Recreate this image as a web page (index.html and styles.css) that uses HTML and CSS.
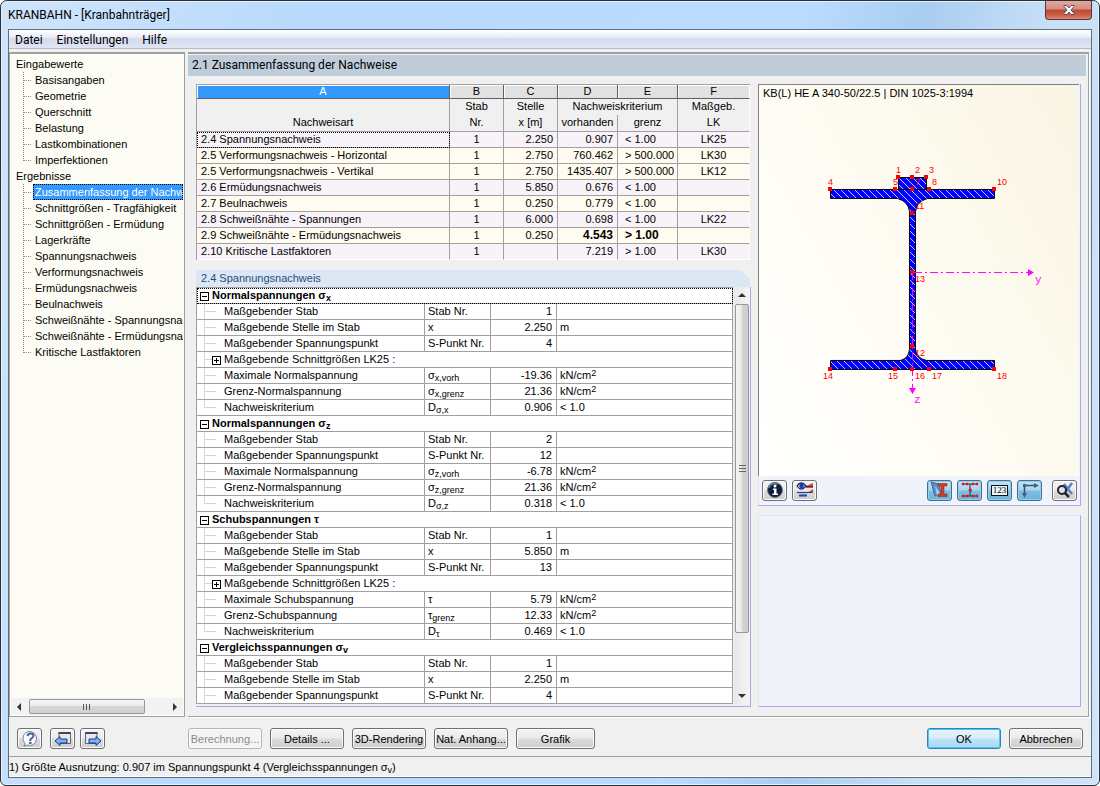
FILE: index.html
```html
<!DOCTYPE html>
<html lang="de">
<head>
<meta charset="utf-8">
<title>KRANBAHN - [Kranbahnträger]</title>
<link rel="stylesheet" href="styles.css">
</head>
<body>
<div class="window">
  <header class="titlebar">
    <h1>KRANBAHN - [Kranbahnträger]</h1>
    <button class="close" aria-label="Schließen"><svg width="12" height="10" viewBox="0 0 12 10"><path d="M1 .5h3L6 3 8 .5h3v1L8 5l3 3.500v1H8L6 7 4 9.500H1v-1L4 5 1 1.500z" fill="#fff" stroke="#555060" stroke-width="1"/></svg></button>
  </header>
  <div class="client">
    <nav class="menubar"><a href="#">Datei</a><a href="#">Einstellungen</a><a href="#">Hilfe</a></nav>
    <div class="workspace">
      <aside class="sidebar">
        <nav class="tree">
          <span class="root">Eingabewerte</span>
          <ul>
            <li><a href="#">Basisangaben</a></li>
            <li><a href="#">Geometrie</a></li>
            <li><a href="#">Querschnitt</a></li>
            <li><a href="#">Belastung</a></li>
            <li><a href="#">Lastkombinationen</a></li>
            <li><a href="#">Imperfektionen</a></li>
          </ul>
          <span class="root">Ergebnisse</span>
          <ul>
            <li><a href="#" class="current">Zusammenfassung der Nachweise</a></li>
            <li><a href="#">Schnittgrößen - Tragfähigkeit</a></li>
            <li><a href="#">Schnittgrößen - Ermüdung</a></li>
            <li><a href="#">Lagerkräfte</a></li>
            <li><a href="#">Spannungsnachweis</a></li>
            <li><a href="#">Verformungsnachweis</a></li>
            <li><a href="#">Ermüdungsnachweis</a></li>
            <li><a href="#">Beulnachweis</a></li>
            <li><a href="#">Schweißnähte - Spannungsnachweis</a></li>
            <li><a href="#">Schweißnähte - Ermüdungsnachweis</a></li>
            <li><a href="#">Kritische Lastfaktoren</a></li>
          </ul>
        </nav>
        <div class="hscroll">
          <button aria-label="Nach links"><svg width="5" height="8" viewBox="0 0 5 8"><path d="M4 0v8L0 4z" fill="#333"/></svg></button>
          <div class="htrack"><div class="hthumb"><i></i><i></i><i></i></div></div>
          <button aria-label="Nach rechts"><svg width="5" height="8" viewBox="0 0 5 8"><path d="M1 0v8l4-4z" fill="#333"/></svg></button>
        </div>
      </aside>

      <main class="main">
        <h2>2.1 Zusammenfassung der Nachweise</h2>
        <div class="columns">
          <div class="results">
            <table class="summary">
              <colgroup><col><col class="w54"><col class="w54"><col class="w60"><col class="w60"><col class="w72"></colgroup>
              <thead>
                <tr class="letters"><th class="picked">A</th><th>B</th><th>C</th><th>D</th><th>E</th><th>F</th></tr>
                <tr class="names top"><th></th><th>Stab</th><th>Stelle</th><th colspan="2">Nachweiskriterium</th><th>Maßgeb.</th></tr>
                <tr class="names low"><th>Nachweisart</th><th>Nr.</th><th>x [m]</th><th>vorhanden</th><th>grenz</th><th>LK</th></tr>
              </thead>
              <tbody>
                <tr class="mauve"><td class="focus">2.4 Spannungsnachweis</td><td>1</td><td>2.250</td><td>0.907</td><td>&lt; 1.00</td><td>LK25</td></tr>
                <tr><td>2.5 Verformungsnachweis - Horizontal</td><td>1</td><td>2.750</td><td>760.462</td><td>&gt; 500.000</td><td>LK30</td></tr>
                <tr><td>2.5 Verformungsnachweis - Vertikal</td><td>1</td><td>2.750</td><td>1435.407</td><td>&gt; 500.000</td><td>LK12</td></tr>
                <tr class="mauve"><td>2.6 Ermüdungsnachweis</td><td>1</td><td>5.850</td><td>0.676</td><td>&lt; 1.00</td><td></td></tr>
                <tr><td>2.7 Beulnachweis</td><td>1</td><td>0.250</td><td>0.779</td><td>&lt; 1.00</td><td></td></tr>
                <tr class="mauve"><td>2.8 Schweißnähte - Spannungen</td><td>1</td><td>6.000</td><td>0.698</td><td>&lt; 1.00</td><td>LK22</td></tr>
                <tr><td>2.9 Schweißnähte - Ermüdungsnachweis</td><td>1</td><td>0.250</td><td class="exceeded">4.543</td><td class="exceeded">&gt; 1.00</td><td></td></tr>
                <tr class="mauve"><td>2.10 Kritische Lastfaktoren</td><td>1</td><td></td><td>7.219</td><td>&gt; 1.00</td><td>LK30</td></tr>
              </tbody>
            </table>

            <section class="detail">
              <h3>2.4 Spannungsnachweis</h3>
              <div class="detail-body">
                <div class="grid-clip">
                <table class="values">
                  <colgroup><col class="w228"><col class="w66"><col class="w66"><col></colgroup>
                  <tbody>
                    <tr class="group"><th colspan="4" class="focus"><button class="toggle" aria-label="Zuklappen"></button>Normalspannungen σ<sub>x</sub></th></tr>
                    <tr><td>Maßgebender Stab</td><td>Stab Nr.</td><td>1</td><td></td></tr>
                    <tr><td>Maßgebende Stelle im Stab</td><td>x</td><td>2.250</td><td>m</td></tr>
                    <tr><td>Maßgebender Spannungspunkt</td><td>S-Punkt Nr.</td><td>4</td><td></td></tr>
                    <tr><td colspan="4"><button class="toggle plus" aria-label="Aufklappen"></button>Maßgebende Schnittgrößen LK25 :</td></tr>
                    <tr><td>Maximale Normalspannung</td><td>σ<sub>x,vorh</sub></td><td>-19.36</td><td>kN/cm<sup>2</sup></td></tr>
                    <tr><td>Grenz-Normalspannung</td><td>σ<sub>x,grenz</sub></td><td>21.36</td><td>kN/cm<sup>2</sup></td></tr>
                    <tr class="last"><td>Nachweiskriterium</td><td>D<sub>σ,x</sub></td><td>0.906</td><td>&lt; 1.0</td></tr>
                    <tr class="group"><th colspan="4"><button class="toggle" aria-label="Zuklappen"></button>Normalspannungen σ<sub>z</sub></th></tr>
                    <tr><td>Maßgebender Stab</td><td>Stab Nr.</td><td>2</td><td></td></tr>
                    <tr><td>Maßgebender Spannungspunkt</td><td>S-Punkt Nr.</td><td>12</td><td></td></tr>
                    <tr><td>Maximale Normalspannung</td><td>σ<sub>z,vorh</sub></td><td>-6.78</td><td>kN/cm<sup>2</sup></td></tr>
                    <tr><td>Grenz-Normalspannung</td><td>σ<sub>z,grenz</sub></td><td>21.36</td><td>kN/cm<sup>2</sup></td></tr>
                    <tr class="last"><td>Nachweiskriterium</td><td>D<sub>σ,z</sub></td><td>0.318</td><td>&lt; 1.0</td></tr>
                    <tr class="group"><th colspan="4"><button class="toggle" aria-label="Zuklappen"></button>Schubspannungen τ</th></tr>
                    <tr><td>Maßgebender Stab</td><td>Stab Nr.</td><td>1</td><td></td></tr>
                    <tr><td>Maßgebende Stelle im Stab</td><td>x</td><td>5.850</td><td>m</td></tr>
                    <tr><td>Maßgebender Spannungspunkt</td><td>S-Punkt Nr.</td><td>13</td><td></td></tr>
                    <tr><td colspan="4"><button class="toggle plus" aria-label="Aufklappen"></button>Maßgebende Schnittgrößen LK25 :</td></tr>
                    <tr><td>Maximale Schubspannung</td><td>τ</td><td>5.79</td><td>kN/cm<sup>2</sup></td></tr>
                    <tr><td>Grenz-Schubspannung</td><td>τ<sub>grenz</sub></td><td>12.33</td><td>kN/cm<sup>2</sup></td></tr>
                    <tr class="last"><td>Nachweiskriterium</td><td>D<sub>τ</sub></td><td>0.469</td><td>&lt; 1.0</td></tr>
                    <tr class="group"><th colspan="4"><button class="toggle" aria-label="Zuklappen"></button>Vergleichsspannungen σ<sub>v</sub></th></tr>
                    <tr><td>Maßgebender Stab</td><td>Stab Nr.</td><td>1</td><td></td></tr>
                    <tr><td>Maßgebende Stelle im Stab</td><td>x</td><td>2.250</td><td>m</td></tr>
                    <tr><td>Maßgebender Spannungspunkt</td><td>S-Punkt Nr.</td><td>4</td><td></td></tr>
                  </tbody>
                </table>
                </div>
                <div class="vscroll">
                  <button aria-label="Nach oben"><svg width="8" height="5" viewBox="0 0 8 5"><path d="M0 4h8L4 0z" fill="#333"/></svg></button>
                  <div class="vtrack"><div class="vthumb"><i></i><i></i><i></i></div></div>
                  <button aria-label="Nach unten"><svg width="8" height="5" viewBox="0 0 8 5"><path d="M0 1h8L4 5z" fill="#333"/></svg></button>
                </div>
              </div>
            </section>
          </div>

          <div class="side">
            <section class="section-view">
              <div class="canvas">
                <p>KB(L) HE A 340-50/22.5 | DIN 1025-3:1994</p>
                <svg class="profile" viewBox="759 101 320 375" preserveAspectRatio="xMidYMin meet" role="img" aria-label="Querschnitt">
                  <defs>
                    <pattern id="hatch" width="7" height="7" patternUnits="userSpaceOnUse"><rect width="7" height="7" fill="#00f"/><path d="M-1-1l9 9M-1 6l2 2M6-1l2 2" stroke="#c4ccff" stroke-width="1"/></pattern>
                  </defs>
                  <g fill="url(#hatch)" stroke="#000" stroke-width="1">
                    <path d="M830.500 189.500h164v9h-67q-11 3-12 13v138q1 9 11 11h68v9h-164v-9h70q8-2 9-11v-138q-1-10-12-13h-67z"/>
                    <path d="M898.500 177.500h28v12h-28z"/>
                  </g>
                  <path d="M912.500 272v116M914 272.500h114" fill="none" stroke="#f0f" stroke-dasharray="8 3 2 3"/>
                  <path d="M1028 269v7l6-3.500zM909 388h7l-3.500 6z" fill="#f0f"/>
                  <g fill="#f00">
                    <path d="M896 175h4v4h-4zM910 175h4v4h-4zM924 175h4v4h-4zM828 187h4v4h-4zM893 187h4v4h-4zM910 187h4v4h-4zM927 187h4v4h-4zM992 187h4v4h-4zM910 211h4v4h-4zM910 270h4v4h-4zM910 344h4v4h-4zM828 367h4v4h-4zM893 367h4v4h-4zM910 367h4v4h-4zM927 367h4v4h-4zM992 367h4v4h-4z"/>
                  </g>
                  <g class="point-labels">
                    <text x="896" y="173">1</text><text x="915" y="173">2</text><text x="929" y="173">3</text>
                    <text x="828" y="185">4</text><text x="893" y="185">5</text><text x="915" y="185">7</text><text x="932" y="185">8</text><text x="997" y="185">10</text>
                    <text x="915" y="209">11</text><text x="915" y="282">13</text><text x="915" y="356">12</text>
                    <text x="823" y="379">14</text><text x="888" y="379">15</text><text x="915" y="379">16</text><text x="932" y="379">17</text><text x="997" y="379">18</text>
                  </g>
                  <g class="axis-labels"><text x="1035" y="283">y</text><text x="914" y="403">z</text></g>
                </svg>
              </div>
              <div class="tools">
                <button aria-label="Info"><svg width="18" height="18" viewBox="0 0 18 18"><circle cx="9" cy="9" r="7.500" fill="#101c3c" stroke="#69748c"/><path d="M3 7a6 5 0 0 1 9-4" fill="none" stroke="#62769c" stroke-width="2"/><circle cx="9" cy="5" r="1.500" fill="#fff"/><path d="M7 7.500h3.500v5H12v1.500H6.500v-1.500H8V9H7z" fill="#fff"/></svg></button>
                <button aria-label="Ergebnisverlauf"><svg width="18" height="18" viewBox="0 0 18 18"><path d="M10 5l7-3v5H10zM11 12l6-4v4z" fill="#d34a42"/><path d="M2 11h9q1 5-4 5.500Q2 16 2 11z" fill="#b9c6dc"/><path d="M1 11.500h15M8 5.500h9" stroke="#33384a" stroke-width="1.200"/><path d="M1 5q4-6 9 0-5 6-9 0z" fill="#eef3ff" stroke="#182a68" stroke-width="1.300"/><circle cx="5.500" cy="5" r="2.300" fill="#1838c8"/><path d="M3 14.500h8" stroke="#2745bd" stroke-width="2"/></svg></button>
                <span class="spacer"></span>
                <button class="on" aria-label="Profil anzeigen"><svg width="20" height="18" viewBox="0 0 20 18"><path d="M1 1l8 2 2 10-6 2z" fill="#5b8fc7" stroke="#446a98"/><path d="M5 5l5 7-3 3z" fill="#a9cce9"/><path d="M8 2.500h9v2.500h-3v8h3v2.500H8V13h3V5H8z" fill="#d33926" stroke="#7c362e" stroke-width=".6"/></svg></button>
                <button class="on" aria-label="Spannungspunkte"><svg width="20" height="18" viewBox="0 0 20 18"><path d="M3 3h14M3 15h14M10 3v12" stroke="#252c35"/><path d="M2 2h2v2H2zM6 2h2v2H6zM12 2h2v2h-2zM16 2h2v2h-2zM9 8h2.500v2.500H9zM2 14h2v2H2zM6 14h2v2H6zM12 14h2v2h-2zM16 14h2v2h-2z" fill="#df1821" stroke="#df1821" stroke-width=".5"/></svg></button>
                <button class="on" aria-label="Nummerierung"><span class="digits">123</span></button>
                <button class="on" aria-label="Achsen"><svg width="20" height="18" viewBox="0 0 20 18"><path d="M4.500 13V4.500H15" fill="none" stroke="#34546c" stroke-width="1.500"/><path d="M3 3h3v3H3z" fill="#44627c"/><path d="M14 2v5l5-2.500zM2 12h5l-2.500 5z" fill="#44627c"/></svg></button>
                <button class="apart" aria-label="Ansicht zurücksetzen"><svg width="18" height="18" viewBox="0 0 18 18"><path d="M8 3l8 10M16 2L8 13" stroke="#5f7fc0" stroke-width="2.500"/><circle cx="6" cy="9" r="4" fill="#dce5ee" stroke="#20242c" stroke-width="2"/><path d="M9 12l4 4" stroke="#20242c" stroke-width="2.500"/></svg></button>
              </div>
            </section>
            <section class="empty-panel"></section>
          </div>
        </div>
      </main>
    </div>

    <footer class="actions">
      <button class="icon" aria-label="Hilfe"><svg width="18" height="18" viewBox="0 0 18 18"><path d="M9 1.500a7 7 0 1 1-3 13.500l-3 1.500 1-3A7 7 0 0 1 9 1.500z" fill="#f7f9fc" stroke="#7c8593"/><path d="M6.500 6q.5-2.500 3-2.500 3 0 3 2.200C12.500 8 9 8 9 11" fill="none" stroke="#4a639c" stroke-width="2"/><path d="M8 12h2.500v2H8z" fill="#4a639c"/></svg></button>
      <button class="icon" aria-label="Vorherige Maske"><svg width="18" height="18" viewBox="0 0 18 18"><path d="M5 2.500h11.500v11H5z" fill="#e5e8ed" stroke="#5b6270"/><path d="M4.500 3h12" stroke="#3d485e" stroke-width="2"/><path d="M1 11L6 6.500V9h7v4H6v2.500z" fill="#7fb0ee" stroke="#173a82"/></svg></button>
      <button class="icon near" aria-label="Nächste Maske"><svg width="18" height="18" viewBox="0 0 18 18"><path d="M1.500 2.500H13v11H1.500z" fill="#e5e8ed" stroke="#5b6270"/><path d="M1.500 3h12" stroke="#3d485e" stroke-width="2"/><path d="M17 11l-5-4.500V9H5v4h7v2.500z" fill="#7fb0ee" stroke="#173a82"/></svg></button>
      <button class="first" disabled>Berechnung...</button>
      <button>Details ...</button>
      <button>3D-Rendering</button>
      <button>Nat. Anhang...</button>
      <button class="wide">Grafik</button>
      <button class="default">OK</button>
      <button>Abbrechen</button>
    </footer>
    <div class="status">1) Größte Ausnutzung: 0.907 im Spannungspunkt 4 (Vergleichsspannungen σ<sub>v</sub>)</div>
  </div>
</div>
</body>
</html>
```
FILE: styles.css
```css
* { box-sizing: border-box; }
body { margin: 0; background: #fff; font: 11px/16px "Liberation Sans", Arial, sans-serif; color: #000; }
button { font: inherit; color: inherit; margin: 0; padding: 0; display: flex; align-items: center; justify-content: center; white-space: nowrap; }
a { color: inherit; text-decoration: none; }
h1, h2, h3, p, ul { margin: 0; padding: 0; font-weight: normal; }
sub, sup { font-size: 9px; line-height: 0; }
sub { vertical-align: -2px; }
sup { vertical-align: 3px; }

.window {
  height: 100vh; min-height: 786px; display: flex; flex-direction: column; padding: 0 7px 7px 7px;
  border: 1px solid #26303a; border-radius: 7px 7px 6px 6px;
  background: linear-gradient(100deg, #cfe4fa 0, #b9dafd 25%, #b9dcff 65%, #a9cdf0 75%, #c7dff7 85%, #cfe3f9 100%);
  box-shadow: inset 0 0 0 1px #e6f3ff;
}
.titlebar { height: 28px; flex: none; display: flex; justify-content: space-between; align-items: flex-start; }
.titlebar h1 { font: 12px/28px Roboto, sans-serif; }
.close { width: 47px; height: 19px; border: 1px solid #5d3434; border-top: 0; border-radius: 0 0 4px 4px; background: linear-gradient(#e6a99d 0, #d58c80 45%, #bd4830 50%, #c9634a 80%, #dc8a72 100%); }

.client { flex: 1; min-height: 0; display: flex; flex-direction: column; background: #f0f0f0; border: 1px solid #5f6f80; }
.menubar { height: 19px; flex: none; display: flex; gap: 14px; padding-left: 6px; font: 12px/20px Roboto, sans-serif; background: linear-gradient(#fff 0, #eef0f9 35%, #d5dbee 50%, #e0e5f3 100%); border-bottom: 1px solid #b6bccc; }
.workspace { flex: 1; min-height: 0; display: flex; gap: 3px; padding: 3px 2px 0 0; }

.sidebar { width: 176px; flex: none; display: flex; flex-direction: column; background: #fcfcf4; border: 1px solid #a0a0a0; border-top: 2px solid #a0a0a0; box-shadow: inset 1px 1px 0 #fff; }
.tree { flex: 1; min-height: 0; overflow: hidden; padding: 2px 1px 0 6px; }
.root { display: block; height: 16px; }
.tree ul { list-style: none; margin-left: 7px; }
.tree li { height: 16px; display: flex; background: repeating-linear-gradient(#888 0 1px, transparent 1px 2px) 0 0 / 1px 100% no-repeat; }
.tree li:last-child { background-size: 1px 8px; }
.tree li::before { content: ""; flex: none; width: 8px; height: 8px; margin-right: 2px; border-bottom: 1px dotted #888; }
.tree a { flex: 1; min-width: 0; padding-left: 2px; white-space: nowrap; overflow: hidden; }
.tree a.current { background: #3399ff; color: #fff; outline: 1px dotted #000; outline-offset: -1px; }
.hscroll { height: 17px; margin: 0 1px 1px; flex: none; display: flex; background: #f2f2f2; }
.hscroll button { width: 17px; border: 0; background: none; }
.htrack { flex: 1; }
.hthumb { width: 84%; height: 15px; margin: 1px; display: flex; align-items: center; justify-content: center; gap: 2px; border: 1px solid #979797; border-radius: 2px; background: linear-gradient(#f5f5f5 0, #ebebeb 45%, #d6d6d8 50%, #d2d2d4 100%); }
.hthumb i { width: 1px; height: 6px; background: #555; }

.main { flex: 1; min-width: 0; display: flex; flex-direction: column; border: 1px solid #a0a0a0; border-width: 2px 1px 1px 0; box-shadow: 1px 1px 0 #fff; padding: 1px 2px 9px 0; }
h2 { height: 21px; flex: none; padding-left: 4px; font: 12px/20px Roboto, sans-serif; background: #bfcdda; }
.columns { flex: 1; min-height: 0; display: grid; grid-template-columns: minmax(0, 555fr) minmax(0, 323fr); gap: 7px; padding: 8px 5px 0 8px; }
.results { min-height: 0; display: flex; flex-direction: column; gap: 10px; }

table { border-collapse: separate; border-spacing: 0; table-layout: fixed; width: 100%; }
th, td { padding: 0 4px; height: 16px; line-height: 15px; font-weight: normal; white-space: nowrap; overflow: hidden; border: 0 solid #a0a0a0; border-width: 0 1px 1px 0; }
.w54 { width: 54px; } .w60 { width: 60px; } .w72 { width: 72px; } .w66 { width: 66px; } .w228 { width: 228px; }

.summary { border: 1px solid #a0a0a0; border-width: 1px 0 0 1px; margin-right: 1px; width: calc(100% - 1px); }
.summary tr > :last-child { border-right-color: #fff; }
.letters th { height: 14px; line-height: 13px; background: #e1e1e1; border-color: #606060; box-shadow: inset 1px 1px 0 #fff; }
.letters .picked { background: #3399ff; color: #fff; }
.names th { background: #f0f0f0; padding: 0; line-height: 14px; vertical-align: top; }
.names.top th { border-bottom: 0; }
.names.low th { height: 17px; }
.summary tbody tr { background: #fffbf0; }
.summary tbody .mauve { background: #f8f3f8; }
.summary td:nth-child(2), .summary td:nth-child(6) { text-align: center; }
.summary td:nth-child(3), .summary td:nth-child(4) { text-align: right; }
.summary td:nth-child(5) { padding-left: 7px; padding-right: 0; }
.summary tbody tr:last-child td { border-bottom-color: #fff; }
.summary .exceeded { font-weight: bold; font-size: 12px; }
.focus { outline: 1px dotted #000; outline-offset: -1px; }

.detail { flex: 1; min-height: 0; display: flex; flex-direction: column; }
h3 { height: 17px; flex: none; margin-right: 1px; padding-left: 5px; font-size: 11px; line-height: 17px; color: #1f4e79; background: #dce7f5; clip-path: polygon(0 0, calc(100% - 9px) 0, 100% 9px, 100% 100%, 0 100%); }
.detail-body { flex: 1; min-height: 0; display: flex; border-right: 1px solid #a8a8f0; border-bottom: 1px solid #a8a8f0; padding-bottom: 2px; }
.grid-clip { flex: 1; min-width: 0; overflow: hidden; }
.values { background: #fff; border: 1px solid #a0a0a0; border-width: 1px 0 0 1px; }
.values td:nth-child(3) { text-align: right; }
.values td:nth-child(n+2) { padding-left: 3px; }
.values td:first-child { padding-left: 27px; background: linear-gradient(#d4d4d4, #d4d4d4) 7px 0 / 1px 100% no-repeat, linear-gradient(#d4d4d4, #d4d4d4) 7px 7px / 12px 1px no-repeat; }
.values .last td:first-child { background-size: 1px 8px, 12px 1px; }
.values th { text-align: left; font-weight: bold; padding-left: 3px; }
.toggle { display: inline-block; vertical-align: -1px; width: 9px; height: 9px; margin-right: 3px; border: 1px solid #000; background: linear-gradient(#000, #000) center / 5px 1px no-repeat, #fff; }
.toggle.plus { margin-left: -12px; background: linear-gradient(#000, #000) center / 5px 1px no-repeat, linear-gradient(#000, #000) center / 1px 5px no-repeat, #fff; }

.vscroll { width: 16px; margin-left: 1px; flex: none; display: flex; flex-direction: column; background: linear-gradient(90deg, #e8e8e8, #f5f5f5); }
.vscroll button { height: 17px; border: 0; background: none; }
.vtrack { flex: 1; }
.vthumb { height: 86%; margin: 0 1px; display: flex; flex-direction: column; align-items: center; justify-content: center; gap: 2px; border: 1px solid #979797; border-radius: 2px; background: linear-gradient(90deg, #f5f5f5 0, #ebebeb 45%, #d4d4d6 50%, #cfcfd1 100%); }
.vthumb i { width: 7px; height: 1px; background: #666; }

.side { min-height: 0; display: flex; flex-direction: column; gap: 9px; }
.section-view { display: flex; flex-direction: column; flex: 423; min-height: 0; background: #f0f3f9; border: 0 solid #a8a8f0; border-width: 0 1px 1px 0; }
.canvas { flex: 1; min-height: 0; display: flex; flex-direction: column; margin-right: 1px; border: 1px solid #808080; border-width: 1px 0 0 1px; background: linear-gradient(60deg, #fff 0, #fefcf3 45%, #f9f5e4 100%); }
.canvas p { padding-left: 4px; line-height: 16px; }
.profile { flex: 1; min-height: 0; width: 100%; display: block; }
.point-labels { font-size: 9px; fill: #f00; }
.axis-labels { font: 11px "Liberation Mono", monospace; fill: #f0f; }
.tools { height: 29px; flex: none; display: flex; gap: 5px; align-items: center; padding: 0 3px; border-left: 1px solid #dce7f5; }
.tools .spacer { flex: 1; }
.tools .apart { margin-left: 5px; }
.tools button, .actions .icon { width: 25px; height: 21px; }
.empty-panel { flex: 191; background: #f0f3f9; border: 1px solid #a8a8f0; border-top-color: #dce7f5; border-left-color: #dce7f5; }

.tools button, .actions button { border: 1px solid #707070; border-radius: 3px; background: linear-gradient(#f3f3f3 0, #ebebeb 48%, #dbdbdb 52%, #cdcdcd 100%); box-shadow: inset 0 0 0 1px #fbfbfb; }
.tools .on { border-color: #3f7292; background: linear-gradient(#c8e2f3 0, #a9d4ec 48%, #7fbfe0 52%, #6ab2d8 100%); box-shadow: inset 0 0 0 1px #9ccce4; }
.digits { border: 1px solid #111; background: #e9f4fb; font: 9px/9px "Liberation Serif", serif; padding: 0 1px; }

.actions { height: 39px; flex: none; display: flex; gap: 8px; align-items: center; padding: 4px 8px 0 8px; }
.actions button { width: 74px; height: 21px; }
.actions .near { margin-left: -3px; }
.actions .first { margin-left: 75px; }
.actions .wide { width: 79px; }
.actions .default { margin-left: auto; border-color: #3c7fb1; background: linear-gradient(#e8f4fc 0, #d8edfa 48%, #bde2f8 52%, #a9d8f2 100%); box-shadow: inset 0 0 0 1px #3fcdf5; }
.actions button:disabled { color: #8c8c8c; border-color: #b0b6bc; background: #f4f4f4; }
.status { height: 21px; flex: none; line-height: 20px; border-top: 1px solid #a0a0a0; border-bottom: 1px solid #fff; }
```
